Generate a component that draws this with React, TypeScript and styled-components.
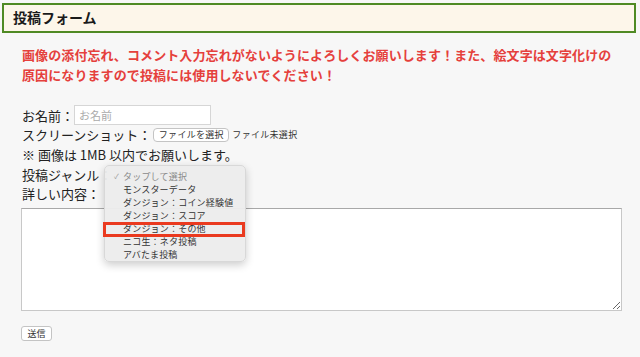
import styled, { createGlobalStyle } from 'styled-components';

const GlobalStyle = createGlobalStyle`
  html, body {
    margin: 0;
    padding: 0;
    background: #f7f7f7;
    font-family: "Noto Sans CJK JP", "Noto Sans", sans-serif;
    color: #222;
  }
`;

const Page = styled.div`
  width: 640px;
  height: 357px;
  overflow: hidden;
  padding-top: 3px;
  box-sizing: border-box;
`;

const Header = styled.h2`
  margin: 0 4px 0 2px;
  height: 30px;
  box-sizing: border-box;
  border: 2.5px solid #4f8a24;
  background: #fdf6ea;
  font-size: 14px;
  font-weight: bold;
  line-height: 25px;
  padding-left: 9px;
  color: #1a1a1a;
`;

const Notice = styled.p`
  margin: 12px 0 0 22px;
  font-size: 13px;
  font-weight: bold;
  line-height: 20px;
  color: #e5403c;
  letter-spacing: 0.1px;
`;

const Form = styled.form`
  margin-top: 20px;
  padding-left: 21px;
`;

const Row = styled.div<{ $h: number }>`
  position: relative;
  display: flex;
  align-items: center;
  height: ${(p) => p.$h}px;
  font-size: 13px;
  padding-left: 1px;
`;

const TextInput = styled.input`
  width: 137px;
  height: 20px;
  box-sizing: border-box;
  border: 1px solid #d6d6d6;
  background: #fff;
  font-family: inherit;
  font-size: 11px;
  padding: 0 4px;
  margin-left: 0;
  &::placeholder {
    color: #aaa;
  }
`;

const FileButton = styled.span`
  display: inline-flex;
  align-items: center;
  justify-content: center;
  width: 76px;
  height: 14px;
  box-sizing: border-box;
  margin-left: 2px;
  border: 1px solid #c4c4c4;
  border-radius: 4px;
  background: #fff;
  font-size: 9px;
  letter-spacing: 0.3px;
  color: #333;
`;

const FileState = styled.span`
  font-size: 9px;
  margin-left: 3px;
  letter-spacing: 0.3px;
  color: #333;
`;

const Popup = styled.div`
  position: absolute;
  left: 83px;
  top: 0;
  width: 142px;
  height: 97px;
  box-sizing: border-box;
  padding-top: 4px;
  background: rgba(236, 236, 236, 0.96);
  border: 1px solid #d8d8d8;
  border-radius: 5px;
  box-shadow: 0 3px 8px rgba(0, 0, 0, 0.2);
  z-index: 2;
`;

const MenuItem = styled.div<{ $muted?: boolean }>`
  position: relative;
  height: 13px;
  line-height: 13px;
  padding-left: 18px;
  font-size: 9px;
  letter-spacing: 0.2px;
  color: ${(p) => (p.$muted ? '#8a8a8a' : '#333')};
`;

const Check = styled.span`
  position: absolute;
  left: 9px;
  top: 0;
  font-size: 7px;
  color: #9a9a9a;
`;

const Highlight = styled.div`
  position: absolute;
  left: -2px;
  top: 56px;
  width: 142px;
  height: 15px;
  border: 3px solid #ea3a1f;
  box-sizing: border-box;
`;

const Details = styled.textarea`
  display: block;
  margin-top: 5px;
  width: 601px;
  height: 103px;
  box-sizing: border-box;
  border: 1px solid #c8c8c8;
  border-top-color: #a8a8a8;
  background: #fff;
  resize: both;
`;

const Submit = styled.button`
  display: block;
  margin-top: 15px;
  height: 15px;
  width: 31px;
  padding: 0;
  border: 1px solid #c4c4c4;
  border-radius: 3px;
  background: #fff;
  font-family: inherit;
  font-size: 9px;
  line-height: 13px;
  color: #333;
`;

const genres = [
  'モンスターデータ',
  'ダンジョン：コイン経験値',
  'ダンジョン：スコア',
  'ダンジョン：その他',
  'ニコ生：ネタ投稿',
  'アバたま投稿',
];

export default function App() {
  return (
    <>
      <GlobalStyle />
      <Page>
        <Header>投稿フォーム</Header>
        <Notice>
          画像の添付忘れ、コメント入力忘れがないようによろしくお願いします！また、絵文字は文字化けの
          <br />
          原因になりますので投稿には使用しないでください！
        </Notice>
        <Form onSubmit={(e) => e.preventDefault()}>
          <Row $h={20}>
            お名前：<TextInput placeholder="お名前" />
          </Row>
          <Row $h={19}>
            スクリーンショット：<FileButton>ファイルを選択</FileButton>
            <FileState>ファイル未選択</FileState>
          </Row>
          <Row $h={21}>※ 画像は 1MB 以内でお願いします。</Row>
          <Row $h={19}>
            投稿ジャンル：
            <Popup>
              <MenuItem $muted>
                <Check>✓</Check>タップして選択
              </MenuItem>
              {genres.map((g) => (
                <MenuItem key={g}>{g}</MenuItem>
              ))}
              <Highlight />
            </Popup>
          </Row>
          <Row $h={19}>詳しい内容：</Row>
          <Details />
          <Submit type="submit">送信</Submit>
        </Form>
      </Page>
    </>
  );
}
